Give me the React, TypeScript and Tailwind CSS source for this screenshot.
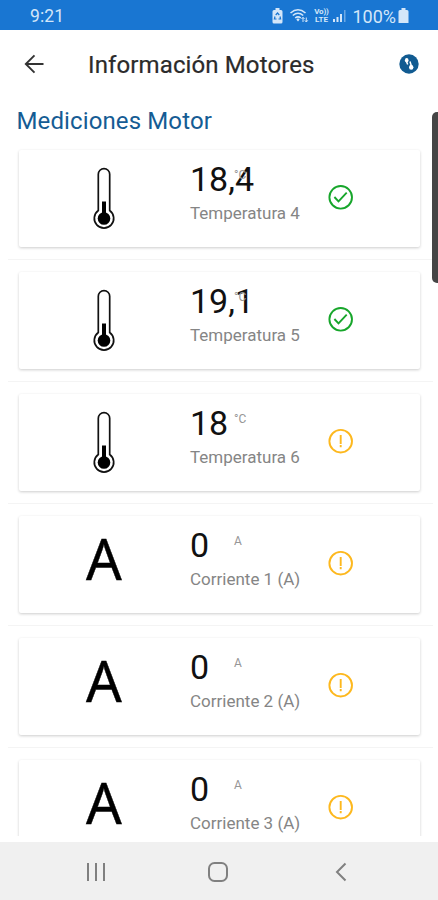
import React from 'react';

type Row = { kind: 'temp' | 'amp'; value: string; unit: string; label: string; ok: boolean };

const rows: Row[] = [
  { kind: 'temp', value: '18,4', unit: '°C', label: 'Temperatura 4', ok: true },
  { kind: 'temp', value: '19,1', unit: '°C', label: 'Temperatura 5', ok: true },
  { kind: 'temp', value: '18', unit: '°C', label: 'Temperatura 6', ok: false },
  { kind: 'amp', value: '0', unit: 'A', label: 'Corriente 1 (A)', ok: false },
  { kind: 'amp', value: '0', unit: 'A', label: 'Corriente 2 (A)', ok: false },
  { kind: 'amp', value: '0', unit: 'A', label: 'Corriente 3 (A)', ok: false },
];

function Thermometer() {
  return (
    <svg width="24" height="64" viewBox="0 0 24 64" fill="none">
      <path d="M6.300 43.500V7.300a5.700 5.700 0 0 1 11.400 0v36.200a9.700 9.700 0 1 1-11.400 0Z" stroke="#111" strokeWidth="1.700" />
      <path d="M12 34.500v14" stroke="#000" strokeWidth="4" />
      <circle cx="12" cy="51.500" r="6.300" fill="#000" />
    </svg>
  );
}

function Status({ ok }: { ok: boolean }) {
  return ok ? (
    <svg width="26" height="26" viewBox="0 0 26 26" fill="none" stroke="#17a62b" strokeWidth="1.900">
      <circle cx="12.700" cy="13.300" r="11.300" />
      <path d="m6.400 13 4.100 4.300 8.200-8.600" />
    </svg>
  ) : (
    <svg width="26" height="26" viewBox="0 0 26 26" fill="none" stroke="#fdb81e" strokeWidth="1.900">
      <circle cx="12.700" cy="13.200" r="11.300" />
      <path d="M12.700 7v9M12.700 17v2.200" />
    </svg>
  );
}

function StatusBar() {
  return (
    <div className="flex h-[30px] shrink-0 items-center justify-between bg-[#1976d2] pr-[29px] pl-[30px] pt-[2px] text-[#d3e6f9]">
      <span className="pt-[2px] text-[17.500px] leading-none tracking-[0.100px]">9:21</span>
      <div className="flex items-center">
        <svg width="11" height="16" viewBox="0 0 11 16">
          <path d="M3.500 0h4v2H9a1.500 1.500 0 0 1 1.500 1.500v10.500a1.500 1.500 0 0 1-1.500 1.500H2A1.500 1.500 0 0 1 .5 14V3.500A1.500 1.500 0 0 1 2 2h1.500Z" fill="currentColor" />
          <path d="m3.700 7 1.800-2 1.800 2M8 8.500l.6 2.500H6.500M4.500 11H2.400L3 8.500" fill="none" stroke="#1976d2" strokeWidth="1.200" />
        </svg>
        <svg className="ml-[6px]" width="20" height="16" viewBox="0 0 19 16" fill="none" stroke="currentColor" strokeWidth="1.600">
          <path d="M1 5q7.500-6.500 15 0M3.300 7.500q5.200-4.500 10.400 0M5.700 10q2.800-2.400 5.600 0" />
          <path d="m6.800 11.500 1.700-1.300 1.700 1.300-1.700 2Z" fill="currentColor" stroke="none" />
          <path d="M13.500 14V9.500M12 11l1.500-1.700L15 11M16.800 9.500V14M15.300 12.300l1.500 1.700 1.500-1.700" strokeWidth="1" />
        </svg>
        <div className="ml-[4px] flex w-[16px] flex-col items-center text-[8px] leading-[8px] font-bold">
          <span className="tracking-[-0.200px]">Vo))</span>
          <span>LTE</span>
        </div>
        <svg className="ml-[4px]" width="14" height="14" viewBox="0 0 14 14" fill="currentColor">
          <path d="M0 10h2v3H0zM3.500 8h2v5h-2zM7 5h2v8H7z" />
          <path d="M11 1h1.500v12H11z" opacity=".45" />
        </svg>
        <span className="ml-[5px] pt-[1px] text-[18px] leading-none">100%</span>
        <svg className="ml-[2px]" width="11" height="16" viewBox="0 0 11 16" fill="currentColor">
          <path d="M3.500 0h4v2H9a1.500 1.500 0 0 1 1.500 1.500V15H.5V3.500A1.500 1.500 0 0 1 2 2h1.500Z" />
        </svg>
      </div>
    </div>
  );
}

function Measurement({ row }: { row: Row }) {
  return (
    <li className="mr-[5px] ml-[8px] h-[122px] shrink-0 border-b border-[#f4f4f4] pt-[12px] pr-[13px] pl-[11px]">
      <div className="flex h-[97px] rounded-[2px] bg-white shadow-[0_1px_3px_rgba(0,0,0,0.2)]">
        <div className="flex w-[170px] shrink-0 justify-center">
          {row.kind === 'temp' ? (
            <div className="pt-[17px]"><Thermometer /></div>
          ) : (
            <span className="pt-[14px] font-['Noto_Sans',sans-serif] text-[56px] leading-[56px] text-black [-webkit-text-stroke:0.4px_black]">A</span>
          )}
        </div>
        <div className="w-[139px] shrink-0 pt-[9px] pl-[1px]">
          <div className="relative h-[40px] text-[34px] leading-[40px] text-[#111]">
            {row.value}
            <span className="absolute top-[9px] left-[44px] text-[12px] leading-[14px] text-[#969696]">{row.unit}</span>
          </div>
          <div className="mt-[4px] text-[17px] leading-[20px] whitespace-nowrap text-[#858585]">{row.label}</div>
        </div>
        <div className="pt-[34px]"><Status ok={row.ok} /></div>
      </div>
    </li>
  );
}

export default function App() {
  return (
    <div className="relative flex h-[900px] w-[438px] flex-col overflow-hidden bg-white font-[Roboto,sans-serif]">
      <StatusBar />
      <header className="flex h-[68px] shrink-0 items-center pr-[19px] pl-[24px]">
        <svg width="20" height="20" viewBox="0 0 20 20" fill="none" stroke="#333" strokeWidth="1.900">
          <path d="M19.500 10H1.800M10.500 1.300 1.800 10l8.700 8.700" />
        </svg>
        <h1 className="ml-[44px] grow pt-[2px] text-[24px] leading-[28px] tracking-[0.120px] whitespace-nowrap text-[#2b2b2b] [-webkit-text-stroke:0.2px_#2b2b2b]">Información Motores</h1>
        <svg width="20" height="20" viewBox="0 0 20 20">
          <circle cx="10" cy="10" r="9.700" fill="#115b91" />
          <ellipse cx="7.700" cy="6.300" rx="1.800" ry="2.200" fill="#fff" />
          <path d="m7.500 7.500 1.200 3M11 7.500l1.500 5" fill="none" stroke="#fff" strokeWidth="1.500" />
          <ellipse cx="12.200" cy="13.300" rx="2.200" ry="2.500" fill="#fff" />
        </svg>
      </header>
      <h2 className="h-[40px] shrink-0 pl-[16.500px] text-[24px] leading-[47px] tracking-[0.120px] text-[#155c94]">Mediciones Motor</h2>
      <ul className="flex h-[698px] shrink-0 flex-col overflow-hidden">
        {rows.map((row) => <Measurement key={row.label} row={row} />)}
      </ul>
      <nav className="mt-[6px] flex grow items-center bg-[#f0f0f0] pt-[2px] pl-[86px] text-[#808080]">
        <svg width="20" height="20" viewBox="0 0 20 20" stroke="currentColor" strokeWidth="2">
          <path d="M2 1v18M10 1v18M18 1v18" />
        </svg>
        <svg className="ml-[101px]" width="22" height="22" viewBox="0 0 22 22" fill="none" stroke="currentColor" strokeWidth="2">
          <rect x="2" y="2" width="18" height="18" rx="5.500" />
        </svg>
        <svg className="ml-[106px]" width="12" height="20" viewBox="0 0 12 20" fill="none" stroke="currentColor" strokeWidth="2">
          <path d="M10.500 1.500 2 10l8.500 8.500" />
        </svg>
      </nav>
      <div className="absolute top-[112px] right-0 h-[171px] w-[6px] rounded-l-[5px] bg-[#454545]" />
    </div>
  );
}
